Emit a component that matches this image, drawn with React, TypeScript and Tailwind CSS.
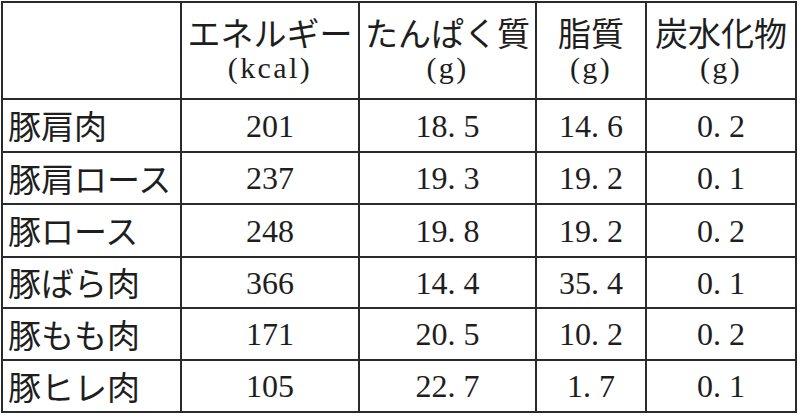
import React from "react";

const jp = { fontFamily: '"Noto Sans CJK JP", "Noto Sans", sans-serif' };
const serif = { fontFamily: '"Liberation Serif", "DejaVu Serif", serif' };

const headers: { ja: string; unit: string }[] = [
  { ja: "エネルギー", unit: "(kcal)" },
  { ja: "たんぱく質", unit: "(g)" },
  { ja: "脂質", unit: "(g)" },
  { ja: "炭水化物", unit: "(g)" },
];

const rows: { name: string; vals: string[] }[] = [
  { name: "豚肩肉", vals: ["201", "18. 5", "14. 6", "0. 2"] },
  { name: "豚肩ロース", vals: ["237", "19. 3", "19. 2", "0. 1"] },
  { name: "豚ロース", vals: ["248", "19. 8", "19. 2", "0. 2"] },
  { name: "豚ばら肉", vals: ["366", "14. 4", "35. 4", "0. 1"] },
  { name: "豚もも肉", vals: ["171", "20. 5", "10. 2", "0. 2"] },
  { name: "豚ヒレ肉", vals: ["105", "22. 7", "1. 7", "0. 1"] },
];

export default function App() {
  return (
    <div className="w-[800px] h-[417px] bg-white pt-[1px] pl-[1px] overflow-hidden">
      <div className="grid grid-cols-[177px_176px_175px_108px_148px] grid-rows-[95px_51px_50px_51px_49px_50px_50px] gap-[2px] p-[2px] bg-[#2a2a2a] w-[796px] text-[#1e1e1e]">
        <div className="bg-white" />
        {headers.map((h) => (
          <div key={h.ja} className="bg-white flex flex-col items-center justify-center pb-[2px]">
            <div className="text-[33px] leading-[36px] h-[36px] whitespace-nowrap" style={jp}>
              {h.ja}
            </div>
            <div className="text-[30px] leading-[35px] h-[35px] tracking-[0.08em] whitespace-nowrap" style={serif}>
              {h.unit}
            </div>
          </div>
        ))}
        {rows.map((r) => (
          <React.Fragment key={r.name}>
            <div className="bg-white flex items-center pl-[5px] text-[33px] leading-none whitespace-nowrap" style={jp}>
              {r.name}
            </div>
            {r.vals.map((v, i) => (
              <div
                key={i}
                className="bg-white flex items-center justify-center text-[32px] leading-none whitespace-pre"
                style={serif}
              >
                {v}
              </div>
            ))}
          </React.Fragment>
        ))}
      </div>
    </div>
  );
}
